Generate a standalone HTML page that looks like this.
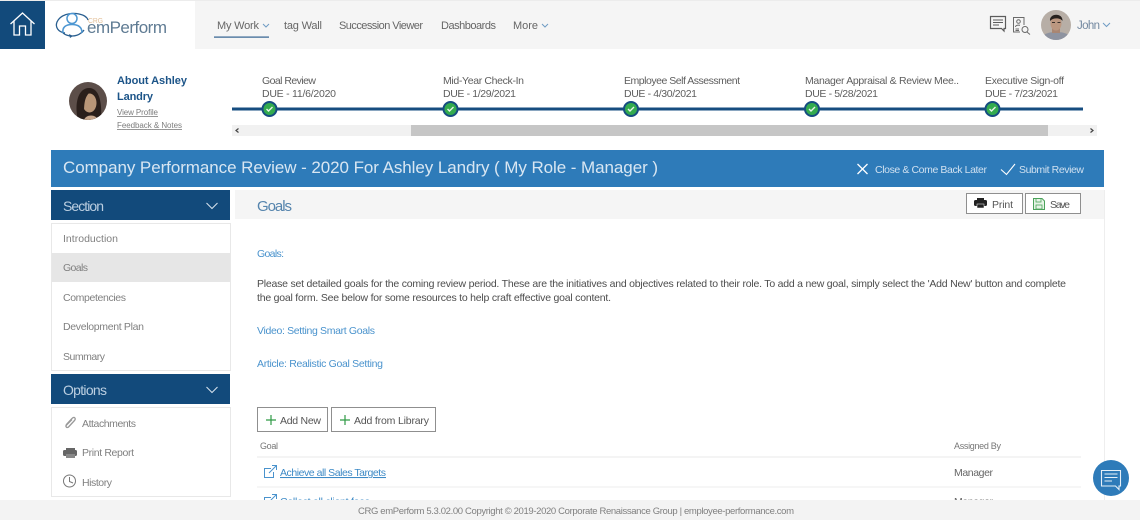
<!DOCTYPE html>
<html lang="en">
<head>
<meta charset="utf-8">
<title>CRG emPerform</title>
<style>
html,body{margin:0;padding:0;background:#fff;width:1140px;height:520px;overflow:hidden}
svg{display:block;filter:blur(.3px)}
text{font-family:"Liberation Sans",sans-serif;white-space:pre}
</style>
</head>
<body>
<svg width="1140" height="520" viewBox="0 0 1140 520" xmlns="http://www.w3.org/2000/svg">
<defs>
<clipPath id="cA"><circle cx="88" cy="101" r="19"/></clipPath>
<clipPath id="cJ"><circle cx="1056" cy="25" r="15"/></clipPath>
<clipPath id="cMain"><rect x="235" y="190" width="870" height="310"/></clipPath>
</defs>
<rect width="1140" height="520" fill="#fff"/>

<!-- Top bar -->
<rect x="0" y="0" width="1140" height="1" fill="#ececec"/>
<rect x="195" y="1" width="945" height="48" fill="#f5f5f5"/>
<rect x="0" y="1" width="45" height="48" fill="#124a7b"/>
<path d="M10.500 24 L22.500 13 L34.500 24 M14 21 V35 H19.500 V26 H25.500 V35 H31 V21" fill="none" stroke="#fff" stroke-width="1.300"/>

<!-- Logo -->
<g fill="none" stroke-width="1.300">
<path d="M65 33 C58 32 55 27 57 22 C60 15 70 12 79 14 C84 15 87 17 88 20" stroke="#2a5f90"/>
<path d="M63 33 C68 37 76 37 81 33 C82 32.500 83 31.500 84 30" stroke="#2a5f90"/>
<circle cx="72" cy="18.500" r="5" stroke="#4d97d2" stroke-width="1.500"/>
<path d="M63 33 C62 27 66 24.500 72 24.500 C78 24.500 82 27 82 33" stroke="#4d97d2" stroke-width="1.500"/>
</g>
<path d="M69 34 l4 2 l-3 2z" fill="#2a5f90"/>
<text x="88" y="23" font-size="7" fill="#e2bf98" textLength="15" lengthAdjust="spacingAndGlyphs">CRG</text>
<text x="87" y="33" font-size="17" fill="#5f7b93" textLength="80" lengthAdjust="spacing">emPerform</text>

<!-- Nav -->
<g font-size="11" fill="#666">
<text x="217" y="29" textLength="42">My Work</text>
<text x="284" y="29" textLength="38">tag Wall</text>
<text x="339" y="29" textLength="84">Succession Viewer</text>
<text x="441" y="29" textLength="55">Dashboards</text>
<text x="513" y="29" textLength="25">More</text>
</g>
<path d="M263 24 l3 3 l3 -3 M542 24 l3 3 l3 -3" fill="none" stroke="#6f9cc4" stroke-width="1"/>
<rect x="214" y="36.500" width="55" height="1.200" fill="#2e5f8e"/>

<!-- Right icons -->
<g fill="none" stroke="#5c5c5c" stroke-width="1.200">
<path d="M990.500 16.500 H1005.500 V28.500 H1004 V31 L1001.500 28.500 H990.500Z"/>
<path d="M993 20 H1003 M993 22.500 H1003 M993 25 H999" stroke-width="1.100"/>
</g>
<g fill="none" stroke="#6a6a6a" stroke-width="1">
<rect x="1013.500" y="17.500" width="10.500" height="14.500"/>
<circle cx="1018.500" cy="21.500" r="1.800"/>
<path d="M1015.500 27 C1015.500 24.500 1021.500 24.500 1021.500 27"/>
</g>
<rect x="1020" y="25" width="9" height="9" fill="#f5f5f5"/>
<g fill="none" stroke="#6a6a6a" stroke-width="1">
<path d="M1015.500 29 H1019 M1015.500 30.500 H1019"/>
<circle cx="1025" cy="29.500" r="3"/>
<path d="M1027 32 L1030 34.500"/>
</g>

<!-- John avatar -->
<g clip-path="url(#cJ)">
<rect x="1041" y="10" width="30" height="30" fill="#b7aea6"/>
<path d="M1041 40 C1041 34 1049 32 1056 32 C1064 32 1071 34 1071 40Z" fill="#8e93a0"/>
<rect x="1052" y="28" width="8" height="5" fill="#a98672"/>
<ellipse cx="1056" cy="23.500" rx="5.500" ry="7" fill="#bb9780"/>
<path d="M1050 21 C1049 13 1063 12.500 1062.500 21 C1060 17.500 1053 17.500 1050 21Z" fill="#28221f"/>
<path d="M1052 22.500 H1055 M1057.500 22.500 H1060.500" stroke="#3a302b" stroke-width="1"/>
</g>
<text x="1077" y="29" font-size="11.500" fill="#7388a0" textLength="23">John</text>
<path d="M1103 23 l3.500 3.500 l3.500 -3.500" fill="none" stroke="#6f9cc4" stroke-width="1"/>

<!-- Profile -->
<g clip-path="url(#cA)">
<rect x="69" y="82" width="38" height="38" fill="#5c4e49"/>
<path d="M78 120 C74 104 78 88 89 88 C100 88 102 104 101 120Z" fill="#2a1f1b"/>
<ellipse cx="89.500" cy="103" rx="7" ry="9.500" fill="#b99678"/>
<path d="M80 106 C80 94 84 90 90 92 C86 96 84 100 84 112Z" fill="#2a1f1b"/>
<path d="M84 120 C86 114 96 114 98 120Z" fill="#c6a68c"/>
</g>
<g font-size="11" font-weight="bold" fill="#1c5488">
<text x="117" y="84" textLength="70">About Ashley</text>
<text x="117" y="100" textLength="36">Landry</text>
</g>
<g font-size="8" fill="#7d7d7d" text-decoration="underline">
<text x="117" y="115" textLength="41">View Profile</text>
<text x="117" y="128" textLength="65">Feedback &amp; Notes</text>
</g>

<!-- Timeline -->
<g font-size="10.500" fill="#5e5e5e">
<text x="262" y="84" textLength="54">Goal Review</text>
<text x="262" y="97" textLength="74">DUE - 11/6/2020</text>
<text x="443" y="84" textLength="81">Mid-Year Check-In</text>
<text x="443" y="97" textLength="73">DUE - 1/29/2021</text>
<text x="624" y="84" textLength="116">Employee Self Assessment</text>
<text x="624" y="97" textLength="73">DUE - 4/30/2021</text>
<text x="805" y="84" textLength="154">Manager Appraisal &amp; Review Mee..</text>
<text x="805" y="97" textLength="73">DUE - 5/28/2021</text>
<text x="985" y="84" textLength="79">Executive Sign-off</text>
<text x="985" y="97" textLength="73">DUE - 7/23/2021</text>
</g>
<rect x="232" y="107.500" width="851" height="3" fill="#164d80"/>
<g>
<g transform="translate(269.500 109)"><circle r="7" fill="#33ab4e" stroke="#164d80" stroke-width="2"/><path d="M-3 0 L-1 2 L3 -2" fill="none" stroke="#e8f6ea" stroke-width="1.400"/></g>
<g transform="translate(450.500 109)"><circle r="7" fill="#33ab4e" stroke="#164d80" stroke-width="2"/><path d="M-3 0 L-1 2 L3 -2" fill="none" stroke="#e8f6ea" stroke-width="1.400"/></g>
<g transform="translate(631 109)"><circle r="7" fill="#33ab4e" stroke="#164d80" stroke-width="2"/><path d="M-3 0 L-1 2 L3 -2" fill="none" stroke="#e8f6ea" stroke-width="1.400"/></g>
<g transform="translate(812 109)"><circle r="7" fill="#33ab4e" stroke="#164d80" stroke-width="2"/><path d="M-3 0 L-1 2 L3 -2" fill="none" stroke="#e8f6ea" stroke-width="1.400"/></g>
<g transform="translate(992.500 109)"><circle r="7" fill="#33ab4e" stroke="#164d80" stroke-width="2"/><path d="M-3 0 L-1 2 L3 -2" fill="none" stroke="#e8f6ea" stroke-width="1.400"/></g>
</g>
<rect x="232" y="125" width="865" height="11" fill="#f1f1f1"/>
<rect x="411" y="125" width="637" height="11" fill="#c6c6c6"/>
<path d="M238.500 128.500 L236 130.500 L238.500 132.500 M1090.500 128.500 L1093 130.500 L1090.500 132.500" fill="none" stroke="#444" stroke-width="1.200"/>

<!-- Banner -->
<rect x="51" y="150" width="1053" height="37" fill="#2e7bb9"/>
<text x="63" y="173" font-size="17" fill="#d8e6f2" textLength="595">Company Performance Review - 2020 For Ashley Landry ( My Role - Manager )</text>
<path d="M857.500 164 L867.500 174 M867.500 164 L857.500 174" stroke="#fff" stroke-width="1.300" fill="none"/>
<text x="875" y="173" font-size="10.500" fill="#cfe0f0" textLength="112">Close &amp; Come Back Later</text>
<path d="M1001 169.500 L1006.500 174.500 L1015 164" stroke="#fff" stroke-width="1.100" fill="none"/>
<text x="1019" y="173" font-size="10.500" fill="#cfe0f0" textLength="65">Submit Review</text>

<!-- Sidebar -->
<rect x="51" y="190" width="179" height="30" fill="#124a7b"/>
<text x="63" y="211" font-size="14" fill="#bccfe1" textLength="41">Section</text>
<path d="M206.500 203 L212 208.500 L217.500 203" fill="none" stroke="#d8e4ee" stroke-width="1"/>
<rect x="51.500" y="223.500" width="179" height="147" fill="#fff" stroke="#e8e8e8"/>
<rect x="52" y="253" width="178" height="29" fill="#e6e6e6"/>
<g font-size="10.500" fill="#808080">
<text x="63" y="242" textLength="55">Introduction</text>
<text x="63" y="271" textLength="25">Goals</text>
<text x="63" y="301" textLength="63">Competencies</text>
<text x="63" y="330" textLength="81">Development Plan</text>
<text x="63" y="360" textLength="42">Summary</text>
</g>
<rect x="51" y="374" width="179" height="30" fill="#124a7b"/>
<text x="63" y="395" font-size="14" fill="#bccfe1" textLength="44">Options</text>
<path d="M206.500 387 L212 392.500 L217.500 387" fill="none" stroke="#d8e4ee" stroke-width="1"/>
<rect x="51.500" y="407.500" width="179" height="89" fill="#fff" stroke="#e8e8e8"/>
<g font-size="10.500" fill="#808080">
<text x="82" y="427" textLength="54">Attachments</text>
<text x="82" y="456" textLength="52">Print Report</text>
<text x="82" y="486" textLength="30">History</text>
</g>
<path d="M66 425 L72 418.500 C74 416 76.500 418.500 74.500 420.500 L68.500 427 C67 428.500 65 426.500 66.500 425 L72 419.500" fill="none" stroke="#999" stroke-width="1.300"/>
<rect x="66" y="448" width="9" height="3" fill="#666"/>
<rect x="63" y="450" width="14" height="6" rx="1.500" fill="#666"/>
<rect x="66" y="454" width="9" height="4" fill="#888"/>
<circle cx="69.500" cy="481" r="6" fill="none" stroke="#777" stroke-width="1"/>
<path d="M69.500 477 V481.500 L73 483" fill="none" stroke="#777"/>

<!-- Main panel -->
<rect x="235" y="190" width="869" height="29" fill="#f5f5f5"/>
<rect x="1104" y="190" width="1" height="310" fill="#eeeeee"/>
<text x="257" y="211" font-size="15" fill="#5584ad" textLength="35">Goals</text>

<rect x="966.500" y="193.500" width="56" height="20" fill="#fff" stroke="#8f8f8f"/>
<rect x="977" y="198" width="7" height="3" fill="#222"/>
<rect x="974" y="200" width="13" height="6" rx="1.500" fill="#222"/>
<rect x="977" y="204" width="7" height="4" fill="#222" stroke="#fff" stroke-width=".5"/>
<text x="992" y="208" font-size="10.500" fill="#555" textLength="21">Print</text>
<rect x="1025.500" y="193.500" width="55" height="20" fill="#fff" stroke="#8f8f8f"/>
<path d="M1033.500 198.500 H1042 L1044.500 201 V209.500 H1033.500Z" fill="#e6f4e6" stroke="#4ba35b"/>
<rect x="1036" y="198.500" width="5" height="3.500" fill="none" stroke="#4ba35b" stroke-width=".8"/>
<rect x="1036" y="205" width="6" height="4" fill="none" stroke="#4ba35b" stroke-width=".8"/>
<text x="1050" y="208" font-size="10.500" fill="#555" textLength="20">Save</text>

<text x="257" y="257" font-size="10.500" fill="#4a93cd" textLength="27">Goals:</text>
<g font-size="10.500" fill="#4d4d4d">
<text x="257" y="287" textLength="809">Please set detailed goals for the coming review period. These are the initiatives and objectives related to their role. To add a new goal, simply select the 'Add New' button and complete</text>
<text x="257" y="301" textLength="354">the goal form. See below for some resources to help craft effective goal content.</text>
</g>
<text x="257" y="334" font-size="10.500" fill="#4a93cd" textLength="118">Video: Setting Smart Goals</text>
<text x="257" y="367" font-size="10.500" fill="#4a93cd" textLength="126">Article: Realistic Goal Setting</text>

<rect x="257.500" y="407.500" width="70" height="24" fill="#fff" stroke="#8f8f8f"/>
<path d="M271 415 V425 M266 420 H276" stroke="#2f9a45" stroke-width="1.200"/>
<text x="280" y="424" font-size="10.500" fill="#555" textLength="41">Add New</text>
<rect x="331.500" y="407.500" width="104" height="24" fill="#fff" stroke="#8f8f8f"/>
<path d="M345 415 V425 M340 420 H350" stroke="#2f9a45" stroke-width="1.200"/>
<text x="354" y="424" font-size="10.500" fill="#555" textLength="75">Add from Library</text>

<text x="260" y="449" font-size="9" fill="#777" textLength="18">Goal</text>
<text x="954" y="449" font-size="9" fill="#777" textLength="47">Assigned By</text>
<rect x="257" y="456.500" width="824" height="1" fill="#e9e9e9"/>
<rect x="257" y="486.500" width="824" height="1" fill="#eeeeee"/>
<g fill="none" stroke="#4a93cd" stroke-width="1">
<path d="M271 468.500 H264.500 V477.500 H273.500 V472"/>
<path d="M269 473 L276 466 M272 465.500 H276.500 V470"/>
</g>
<text x="280" y="476" font-size="10.500" fill="#3d8ac6" text-decoration="underline" textLength="106">Achieve all Sales Targets</text>
<text x="954" y="476" font-size="10.500" fill="#666" textLength="39">Manager</text>
<g clip-path="url(#cMain)">
<g fill="none" stroke="#4a93cd" stroke-width="1">
<path d="M271 497.500 H264.500 V506.500 H273.500 V501"/>
<path d="M269 502 L276 495 M272 494.500 H276.500 V499"/>
</g>
<text x="280" y="505" font-size="10.500" fill="#3d8ac6" text-decoration="underline" textLength="90">Collect all client fees</text>
<text x="954" y="505" font-size="10.500" fill="#666" textLength="39">Manager</text>
</g>

<!-- Footer -->
<rect x="0" y="500" width="1140" height="20" fill="#f3f3f3"/>
<text x="358" y="514" font-size="9.500" fill="#808080" textLength="436">CRG emPerform 5.3.02.00 Copyright © 2019-2020 Corporate Renaissance Group | employee-performance.com</text>

<!-- Chat -->
<circle cx="1111" cy="478" r="18" fill="#2e7bb9"/>
<path d="M1101.500 470.500 H1120.500 V486 H1119 V489.500 L1115.500 486 H1101.500Z" fill="none" stroke="#e6f0f8" stroke-width="1.100"/>
<path d="M1104.500 474 H1117.500 M1104.500 477.500 H1117.500 M1104.500 481 H1112" stroke="#e6f0f8" stroke-width="1.100"/>
</svg>
</body>
</html>
